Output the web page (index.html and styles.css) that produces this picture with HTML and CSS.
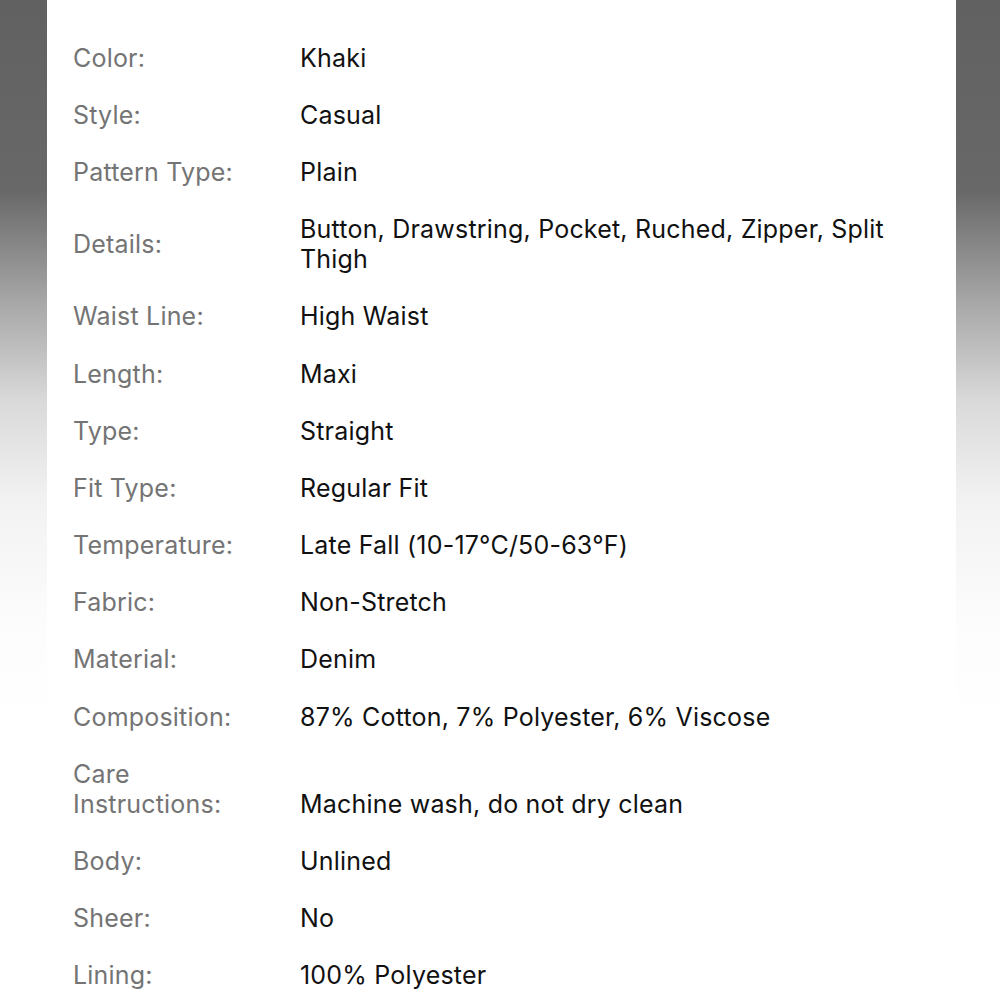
FILE: index.html
```html
<!DOCTYPE html>
<html>
<head>
    <meta charset="UTF-8">
    <title>Product Details</title>
    <link rel="stylesheet" href="styles.css">
</head>
<body>
    <div class="sheet">
        <div class="specs">
            <div class="row"><div class="label">Color:</div><div class="value">Khaki</div></div>
            <div class="row"><div class="label">Style:</div><div class="value">Casual</div></div>
            <div class="row"><div class="label">Pattern Type:</div><div class="value">Plain</div></div>
            <div class="row"><div class="label">Details:</div><div class="value">Button, Drawstring, Pocket, Ruched, Zipper, Split Thigh</div></div>
            <div class="row"><div class="label">Waist Line:</div><div class="value">High Waist</div></div>
            <div class="row"><div class="label">Length:</div><div class="value">Maxi</div></div>
            <div class="row"><div class="label">Type:</div><div class="value">Straight</div></div>
            <div class="row"><div class="label">Fit Type:</div><div class="value">Regular Fit</div></div>
            <div class="row"><div class="label">Temperature:</div><div class="value">Late Fall (10-17°C/50-63°F)</div></div>
            <div class="row"><div class="label">Fabric:</div><div class="value">Non-Stretch</div></div>
            <div class="row"><div class="label">Material:</div><div class="value">Denim</div></div>
            <div class="row"><div class="label">Composition:</div><div class="value">87% Cotton, 7% Polyester, 6% Viscose</div></div>
            <div class="row"><div class="label">Care Instructions:</div><div class="value">Machine wash, do not dry clean</div></div>
            <div class="row"><div class="label">Body:</div><div class="value">Unlined</div></div>
            <div class="row"><div class="label">Sheer:</div><div class="value">No</div></div>
            <div class="row"><div class="label">Lining:</div><div class="value">100% Polyester</div></div>
        </div>
    </div>
</body>
</html>
```

FILE: styles.css
```css
body {
    margin: 0;
    height: 1000px;
    overflow: hidden;
    font-family: Inter, 'Noto Sans', sans-serif;
    background: linear-gradient(#616161 0, #686868 190px, #a6a6a6 300px, #d9d9d9 400px, #f2f2f2 500px, #fcfcfc 620px, #ffffff 720px);
}

.sheet {
    margin: 0 44px 0 47px;
    height: 1000px;
    background: white;
    padding: 29px 0 0 26px;
    box-sizing: border-box;
}

.specs {
    display: flex;
    flex-direction: column;
}

.row {
    display: flex;
    padding: 13.6px 0;
    font-size: 25px;
    line-height: 30px;
    letter-spacing: 0.2px;
}

.label {
    width: 227px;
    flex-shrink: 0;
    align-self: center;
    color: #747474;
    padding-right: 40px;
    box-sizing: border-box;
}

.value {
    align-self: flex-end;
    color: #111;
    padding-right: 50px;
}
```
